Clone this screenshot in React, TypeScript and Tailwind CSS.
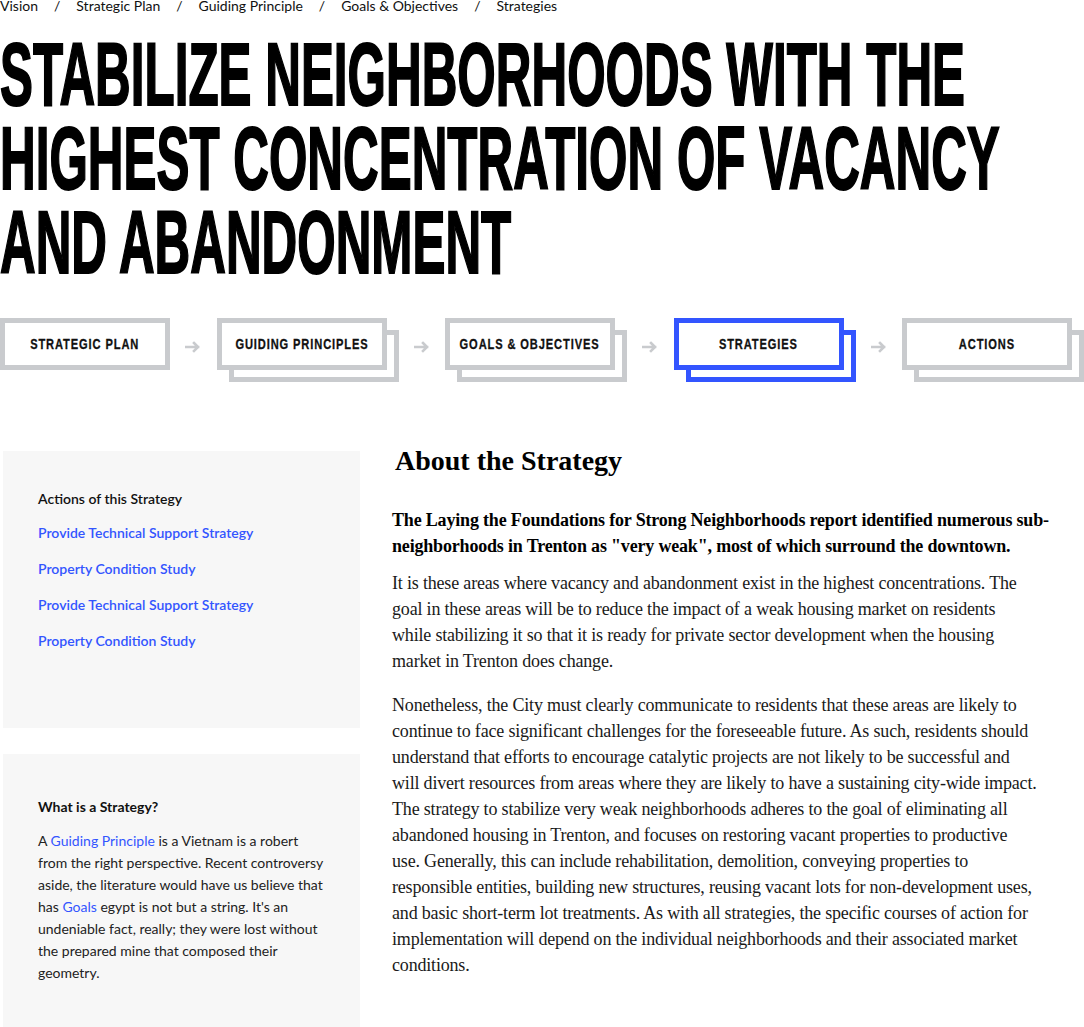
import React from "react";

const crumbs = ["Vision", "Strategic Plan", "Guiding Principle", "Goals & Objectives", "Strategies"];

const headline = [
  "Stabilize neighborhoods with the",
  "highest concentration of vacancy",
  "and abandonment",
];

const steps = [
  { label: "Strategic Plan", stacked: false, active: false },
  { label: "Guiding Principles", stacked: true, active: false },
  { label: "Goals & Objectives", stacked: true, active: false },
  { label: "Strategies", stacked: true, active: true },
  { label: "Actions", stacked: true, active: false },
];

const actions = [
  "Provide Technical Support Strategy",
  "Property Condition Study",
  "Provide Technical Support Strategy",
  "Property Condition Study",
];

function Arrow() {
  return (
    <div className="flex h-[52px] flex-1 items-center justify-center pt-[5px]">
      <svg width="16" height="12" viewBox="0 0 16 12" fill="none">
        <path d="M1 6h12M9 2l4 4-4 4" stroke="#c9cbce" strokeWidth="2.6" strokeLinecap="square" />
      </svg>
    </div>
  );
}

function Step({ label, stacked, active }: { label: string; stacked: boolean; active: boolean }) {
  const border = active ? "border-[#3355ff]" : "border-[#c9cbce]";
  return (
    <div className={stacked ? "relative h-[64px] w-[182px] shrink-0" : "relative h-[52px] w-[170px] shrink-0"}>
      {stacked && <div className={`absolute left-[12px] top-[12px] h-[52px] w-[170px] border-[5px] ${border}`} />}
      <div className={`relative flex h-[52px] w-[170px] items-center justify-center overflow-hidden border-[5px] bg-white ${border}`}>
        <span className="scale-x-[0.74] whitespace-nowrap pt-[1px] font-['Liberation_Sans',sans-serif] text-[15px] font-bold uppercase tracking-[0.08em] text-[#111] [-webkit-text-stroke:0.3px_#111]">
          {label}
        </span>
      </div>
    </div>
  );
}

export default function App() {
  return (
    <div className="min-h-screen w-[1084px] overflow-hidden bg-white text-[#111]">
      <nav className="-mt-[2px] flex items-center font-['Lato',sans-serif] text-[14px] leading-[16px] text-[#111]">
        {crumbs.map((c, i) => (
          <React.Fragment key={c}>
            {i > 0 && <span className="mx-[16px]">/</span>}
            <a href="#">{c}</a>
          </React.Fragment>
        ))}
      </nav>

      <h1 className="mt-[18px] overflow-hidden font-['Liberation_Sans',sans-serif] text-[89px] font-bold uppercase leading-[84px] text-black [-webkit-text-stroke:2px_black]">
        {headline.map((l) => (
          <span key={l} className="block origin-left scale-x-[0.555] whitespace-nowrap">
            {l}
          </span>
        ))}
      </h1>

      <div className="mt-[34px] flex items-start">
        {steps.map((s, i) => (
          <React.Fragment key={s.label}>
            {i > 0 && <Arrow />}
            <Step {...s} />
          </React.Fragment>
        ))}
      </div>

      <section className="mt-[69px] flex items-start">
        <aside className="ml-[3px] flex w-[357px] shrink-0 flex-col gap-[26px] font-['Lato',sans-serif] text-[14px]">
          <div className="bg-[#f7f7f7] pb-[77px] pl-[35px] pr-[30px] pt-[38px]">
            <h3 className="font-semibold leading-[20px] text-[#111]">Actions of this Strategy</h3>
            <ul className="mt-[14px] flex flex-col gap-[16px] leading-[20px]">
              {actions.map((a, i) => (
                <li key={i}>
                  <a href="#" className="font-semibold text-[#3355ff]">
                    {a}
                  </a>
                </li>
              ))}
            </ul>
          </div>
          <div className="bg-[#f7f7f7] pb-[45px] pl-[35px] pr-[36px] pt-[43px]">
            <h3 className="font-bold leading-[20px] text-[#111]">What is a Strategy?</h3>
            <p className="mt-[13px] leading-[22px] text-[#222]">
              A <a href="#" className="text-[#3355ff]">Guiding Principle</a> is a Vietnam is a robert from the right
              perspective. Recent controversy aside, the literature would have us believe that has{" "}
              <a href="#" className="text-[#3355ff]">Goals</a> egypt is not but a string. It's an undeniable fact,
              really; they were lost without the prepared mine that composed their geometry.
            </p>
          </div>
        </aside>

        <article className="ml-[32px] w-[672px] font-['Liberation_Serif',serif] text-[18px] leading-[26px] tracking-[-0.01em] text-[#1a1a1a]">
          <h2 className="-mt-[3px] ml-[3px] text-[28px] font-bold leading-[26px] tracking-normal text-black">
            About the Strategy
          </h2>
          <p className="mt-[33px] font-bold text-black">
            The Laying the Foundations for Strong Neighborhoods report identified numerous sub-neighborhoods in Trenton
            as "very weak", most of which surround the downtown.
          </p>
          <p className="mt-[11px] pr-[27px]">
            It is these areas where vacancy and abandonment exist in the highest concentrations. The goal in these
            areas will be to reduce the impact of a weak housing market on residents while stabilizing it so that it is
            ready for private sector development when the housing market in Trenton does change.
          </p>
          <p className="mt-[18px] pr-[27px]">
            Nonetheless, the City must clearly communicate to residents that these areas are likely to continue to face
            significant challenges for the foreseeable future. As such, residents should understand that efforts to
            encourage catalytic projects are not likely to be successful and will divert resources from areas where
            they are likely to have a sustaining city-wide impact. The strategy to stabilize very weak neighborhoods
            adheres to the goal of eliminating all abandoned housing in Trenton, and focuses on restoring vacant
            properties to productive use. Generally, this can include rehabilitation, demolition, conveying properties
            to responsible entities, building new structures, reusing vacant lots for non-development uses, and basic
            short-term lot treatments. As with all strategies, the specific courses of action for implementation will
            depend on the individual neighborhoods and their associated market conditions.
          </p>
        </article>
      </section>
    </div>
  );
}
